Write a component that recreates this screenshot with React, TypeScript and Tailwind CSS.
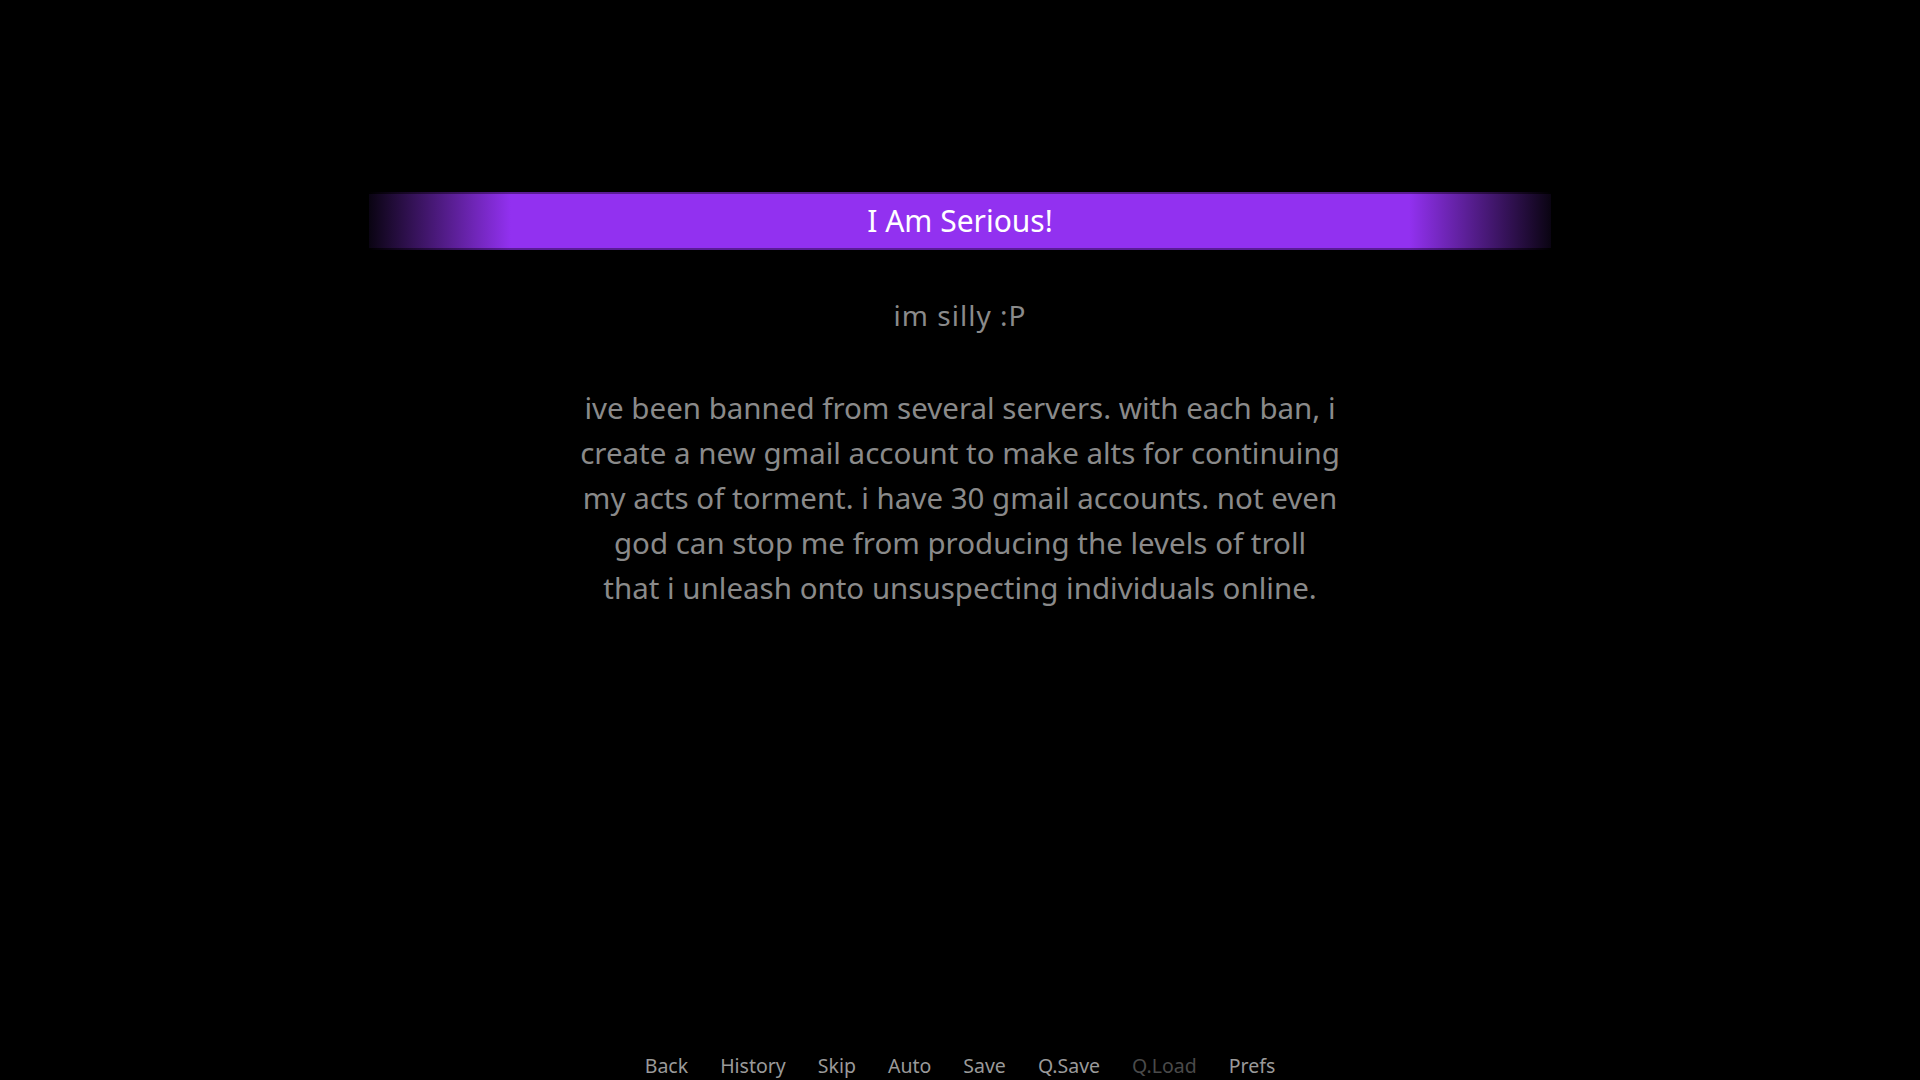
const bodyLines = [
  "ive been banned from several servers. with each ban, i",
  "create a new gmail account to make alts for continuing",
  "my acts of torment. i have 30 gmail accounts. not even",
  "god can stop me from producing the levels of troll",
  "that i unleash onto unsuspecting individuals online.",
];

const quickMenu = [
  { label: "Back", active: true },
  { label: "History", active: true },
  { label: "Skip", active: true },
  { label: "Auto", active: true },
  { label: "Save", active: true },
  { label: "Q.Save", active: true },
  { label: "Q.Load", active: false },
  { label: "Prefs", active: true },
];

export default function App() {
  return (
    <div className="flex h-screen w-full flex-col overflow-hidden bg-black pt-[192px] font-['Noto_Sans',sans-serif]">
      {/* title banner */}
      <div className="mx-auto flex h-[58px] w-[1182px] flex-col bg-[linear-gradient(90deg,#000_0%,#5a1c96_12%,#5a1c96_88%,#000_100%)]">
        <div className="my-[2px] flex flex-1 items-center justify-center bg-[linear-gradient(90deg,#0a0412_0%,#9231f0_12%,#9231f0_88%,#0a0412_100%)]">
          <span className="text-[30px] leading-none text-white">I Am Serious!</span>
        </div>
      </div>

      <p className="mt-[45px] text-center text-[28px] leading-[40px] tracking-[1px] text-[#8a8a8a]">
        im silly :P
      </p>

      <div className="mt-[50px] flex flex-col items-center text-[29.5px] leading-[45px] text-[#8a8a8a]">
        {bodyLines.map((line) => (
          <span key={line} className="whitespace-nowrap">
            {line}
          </span>
        ))}
      </div>

      <div className="flex-1" />

      <nav className="flex justify-center gap-[32px] pb-[2px]">
        {quickMenu.map((item) => (
          <span
            key={item.label}
            className={
              item.active
                ? "text-[19.5px] leading-[24px] text-[#9a9a9a]"
                : "text-[19.5px] leading-[24px] text-[#4a4a4a]"
            }
          >
            {item.label}
          </span>
        ))}
      </nav>
    </div>
  );
}
